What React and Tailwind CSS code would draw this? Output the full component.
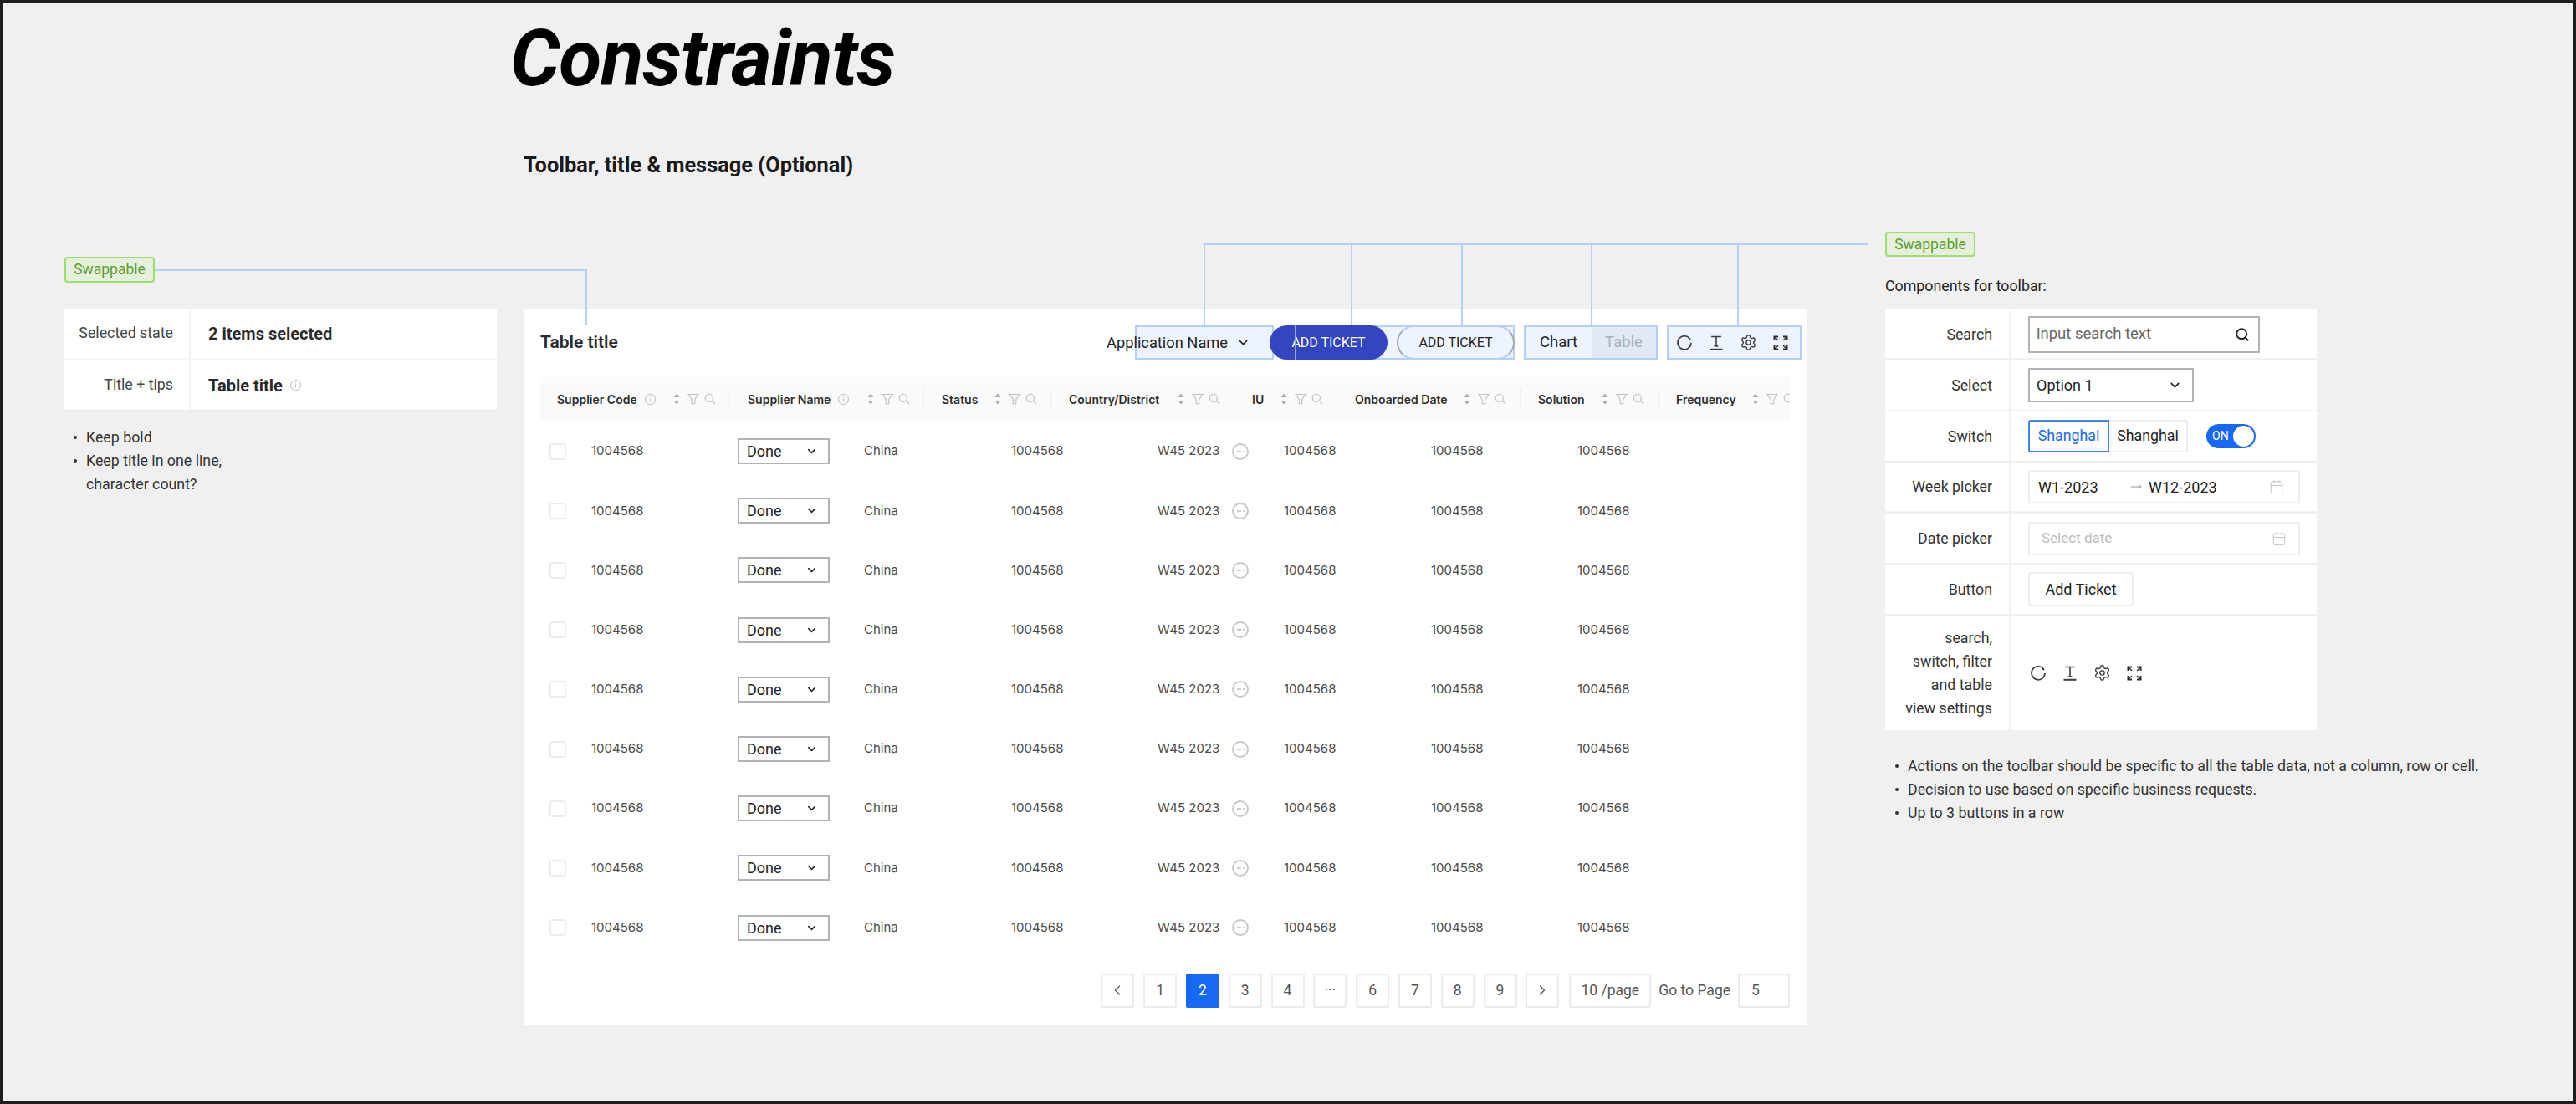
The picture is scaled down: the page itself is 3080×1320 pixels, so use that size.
import React from "react";
import { ChevronDown, ChevronLeft, ChevronRight, Search, Calendar, Settings, MoveRight } from "lucide-react";

const roboto = "font-['Roboto',sans-serif]";
const inter = "font-['Inter',sans-serif]";

function Info({ className = "" }) {
  return (
    <svg viewBox="0 0 16 16" className={"w-[15px] h-[15px] " + className} fill="none" stroke="#b8b8b8" strokeWidth="1">
      <circle cx="8" cy="8" r="6.5" />
      <path d="M8 7v4.2M8 4.6v1" />
    </svg>
  );
}
function Sort() {
  return (
    <svg viewBox="0 0 10 16" className="w-[10px] h-[16px]" fill="#aaaaaa">
      <path d="M5 1.5 8.5 6h-7zM5 14.5 1.5 10h7z" />
    </svg>
  );
}
function Filter() {
  return (
    <svg viewBox="0 0 14 14" className="w-[14px] h-[14px]" fill="none" stroke="#bdbdbd" strokeWidth="1.1">
      <path d="M1 1.5h12L8.8 7.5V12.8H5.2V7.5z" />
    </svg>
  );
}
function MiniSearch() {
  return (
    <svg viewBox="0 0 14 14" className="w-[14px] h-[14px]" fill="none" stroke="#bdbdbd" strokeWidth="1.1">
      <circle cx="5.8" cy="5.8" r="4.6" />
      <path d="m9.2 9.2 3.8 3.8" />
    </svg>
  );
}
function Refresh() {
  return (
    <svg viewBox="0 0 20 20" className="w-[20px] h-[20px]" fill="none" stroke="#3d3d3d" strokeWidth="1.7">
      <path d="M16.6 5.2A8 8 0 1 0 18 10" />
      <circle cx="16.4" cy="5.4" r="1" fill="#3d3d3d" stroke="none" />
    </svg>
  );
}
function TextSize() {
  return (
    <svg viewBox="0 0 20 20" className="w-[20px] h-[20px]" fill="none" stroke="#3d3d3d" strokeWidth="1.7">
      <path d="M4 2.5h12M10 2.5v12M7.5 14h5" strokeWidth="1.6" />
      <path d="M2.5 17.8h15" strokeWidth="2" />
    </svg>
  );
}
function Full() {
  return (
    <svg viewBox="0 0 20 20" className="w-[20px] h-[20px]" fill="none" stroke="#2b2b2b" strokeWidth="2">
      <path d="M2.5 7V2.5H7M13 2.5h4.5V7M17.5 13v4.5H13M7 17.5H2.5V13" />
      <path d="M3 3l4 4M17 3l-4 4M17 17l-4-4M3 17l4-4" strokeWidth="1.4" />
    </svg>
  );
}
function ToolIcons({ className = "" }) {
  return (
    <div className={"flex items-center gap-[18px] " + className}>
      <Refresh />
      <TextSize />
      <Settings size={21} strokeWidth={1.6} color="#3d3d3d" />
      <Full />
    </div>
  );
}

function HeadCell({ name, w, info }) {
  return (
    <div className={"flex items-center shrink-0 " + w}>
      <span className="text-[14px] font-semibold text-[#2e2e2e] whitespace-nowrap">{name}</span>
      {info && <Info className="ml-[8px]" />}
      <div className="ml-auto flex items-center shrink-0">
        <span className="w-[20px] flex justify-center"><Sort /></span>
        <span className="w-[20px] flex justify-center"><Filter /></span>
        <span className="w-[20px] flex justify-center"><MiniSearch /></span>
      </div>
      <span className="w-[1px] h-[24px] bg-[#eeeeee] ml-[13px] mr-[21px] shrink-0" />
    </div>
  );
}

function Done() {
  return (
    <div className={"w-[110px] h-[31px] border-2 border-[#b3b3b3] bg-white flex items-center justify-between pl-[9px] pr-[12px] " + roboto}>
      <span className="text-[18px] text-[#222222]">Done</span>
      <ChevronDown size={15} strokeWidth={2.4} color="#222222" />
    </div>
  );
}

function Row() {
  const num = "text-[15px] text-[#4a4a4a] shrink-0";
  return (
    <div className="h-[71.2px] flex items-center pl-[11px]">
      <div className="w-[50px] shrink-0">
        <div className="w-[20px] h-[20px] rounded-[3px] border-2 border-[#ececec] bg-white" />
      </div>
      <div className={num + " w-[175px]"}>1004568</div>
      <div className="w-[151px] shrink-0"><Done /></div>
      <div className={num + " w-[176px]"}>China</div>
      <div className={num + " w-[175px]"}>1004568</div>
      <div className={num + " w-[89px] whitespace-nowrap"}>W45 2023</div>
      <div className="w-[62px] shrink-0">
        <div className="w-[20px] h-[20px] rounded-full border-2 border-[#c9c9c9] flex items-center justify-center gap-[1.5px]">
          <span className="w-[2px] h-[2px] rounded-full bg-[#bdbdbd]" />
          <span className="w-[2px] h-[2px] rounded-full bg-[#bdbdbd]" />
          <span className="w-[2px] h-[2px] rounded-full bg-[#bdbdbd]" />
        </div>
      </div>
      <div className={num + " w-[176px]"}>1004568</div>
      <div className={num + " w-[175px]"}>1004568</div>
      <div className={num}>1004568</div>
    </div>
  );
}

function PageBtn({ children, active, className = "w-[40px]" }) {
  return (
    <div className={"h-[41px] rounded-[2px] border-2 flex items-center justify-center text-[17.5px] shrink-0 " + className + " " +
      (active ? "bg-[#1668f5] border-[#1668f5] text-white" : "bg-white border-[#ebebeb] text-[#555555]")}>
      {children}
    </div>
  );
}

function Bullet({ children }) {
  return (
    <li className="flex items-center h-[28px]">
      <span className="w-[4px] h-[4px] rounded-full bg-[#333333] shrink-0" />
      <span className="ml-[11px] whitespace-nowrap">{children}</span>
    </li>
  );
}

function Badge({ className = "" }) {
  return (
    <div className={"w-[108px] rounded-[4px] border-2 border-[#9ade6c] bg-[#e5efdc] text-[#5b9e2a] text-[17.5px] flex items-center justify-center " + roboto + " " + className}>
      Swappable
    </div>
  );
}

function CompRow({ label, h = "h-[59px]", children }) {
  return (
    <div className={"flex bg-white " + h}>
      <div className="w-[150px] shrink-0 border-r-2 border-[#f2f2f2] flex items-center justify-end pr-[20px] text-right text-[17.8px] leading-[28px] text-[#333333]">
        {label}
      </div>
      <div className="flex-1 flex items-center pl-[21px]">{children}</div>
    </div>
  );
}

const L = "absolute bg-[#b4cffa]";

export default function App() {
  return (
    <div className={"relative w-[3080px] h-[1320px] border-4 border-[#1e1e1e] bg-[#f0f0f0] overflow-hidden flex pl-[73px] " + roboto}>
      {/* Left column */}
      <div className="w-[517px] shrink-0 pt-[303px]">
        <Badge className="h-[31px]" />
        <div className="mt-[31px] flex flex-col gap-[3px] bg-[#f6f6f6] shadow-[0_1px_0_#e8e8e8]">
          <div className="h-[59px] bg-white flex items-center">
            <div className="w-[151px] h-full border-r-2 border-[#f2f2f2] flex items-center justify-end pr-[19px] text-[17.8px] text-[#444444]">Selected state</div>
            <div className="pl-[21px] text-[20px] font-bold text-[#2a2a2a]">2 items selected</div>
          </div>
          <div className="h-[59px] bg-white flex items-center">
            <div className="w-[151px] h-full border-r-2 border-[#f2f2f2] flex items-center justify-end pr-[19px] text-[17.8px] text-[#444444]">Title + tips</div>
            <div className="pl-[21px] text-[20px] font-bold text-[#2a2a2a]">Table title</div>
            <Info className="ml-[8px]" />
          </div>
        </div>
        <ul className="mt-[19px] pl-[11px] text-[17.8px] text-[#333333]">
          <Bullet>Keep bold</Bullet>
          <Bullet>Keep title in one line,</Bullet>
          <li className="h-[28px] flex items-center pl-[15px]">character count?</li>
        </ul>
      </div>

      {/* Centre column */}
      <div className="w-[1534px] shrink-0 ml-[32px]">
        <h1 className="h-[140px] -ml-[16px] pt-[8px] text-[93.5px] leading-[116px] font-bold italic text-black whitespace-nowrap tracking-[-1px]">Constraints</h1>
        <div className="h-[225px] pt-[36px] text-[25.4px] leading-[34px] font-bold text-[#1a1a1a]">Toolbar, title &amp; message (Optional)</div>

        <div className={"w-[1534px] h-[856px] bg-white px-[20px] pt-[20px] " + inter}>
          <div className="h-[41px] flex items-center -mr-[14px]">
            <div className={"text-[21px] font-semibold text-[#2b2b2b] " + roboto}>Table title</div>
            {/* Toolbar */}
            <div className={"ml-auto flex items-center h-[41px] " + roboto}>
              <div className="relative w-[200px] h-full flex items-center">
                <div className="absolute left-[34px] right-0 top-0 bottom-0 bg-[#eef4ff] border-2 border-[#b4cffa]" />
                <span className="relative text-[18.3px] text-[#222222]">Application Name</span>
                <ChevronDown className="relative ml-[10px]" size={17} strokeWidth={2} color="#222222" />
              </div>
              <div className="relative -ml-[5px] flex items-center gap-[11px] h-full">
                <div className="absolute left-[30px] right-0 top-0 bottom-0 bg-[#eef4ff] border-2 border-[#b4cffa]" />
                <div className="relative w-[141px] h-[41px] rounded-full bg-[#3544bf] text-white text-[16px] flex items-center justify-center">ADD TICKET</div>
                <div className="relative w-[141px] h-[41px] rounded-full border-2 border-x-[#a8a8a8] border-y-[#b4cffa] bg-[#eef4ff] text-[#222222] text-[16px] flex items-center justify-center">ADD TICKET</div>
                <div className="absolute left-[30px] top-0 bottom-0 w-[2px] bg-[#8fa4ea]" />
              </div>
              <div className="ml-[11px] w-[160px] h-full flex border-2 border-[#b4cffa] bg-[#eef4ff] text-[18.5px]">
                <div className="w-[79px] flex items-center justify-center text-[#222222]">Chart</div>
                <div className="flex-1 bg-[#e2e9f5] flex items-center justify-center text-[#a9b0ba]">Table</div>
              </div>
              <div className="ml-[11px] w-[161px] h-full border-2 border-[#b4cffa] bg-[#eef4ff] flex items-center pl-[9px]">
                <ToolIcons />
              </div>
            </div>
          </div>

          <div className="mt-[21px] h-[52px] w-[1494px] bg-[#fafafa] overflow-hidden flex items-center pl-[20px]">
            <HeadCell name="Supplier Code" w="w-[228px]" info />
            <HeadCell name="Supplier Name" w="w-[232px]" info />
            <HeadCell name="Status" w="w-[152px]" />
            <HeadCell name="Country/District" w="w-[219px]" />
            <HeadCell name="IU" w="w-[123px]" />
            <HeadCell name="Onboarded Date" w="w-[219px]" />
            <HeadCell name="Solution" w="w-[165px]" />
            <HeadCell name="Frequency" w="w-[180px]" />
          </div>

          <div className="pt-[1px]">
            {[0, 1, 2, 3, 4, 5, 6, 7, 8].map((i) => <Row key={i} />)}
          </div>

          <div className={"mt-[19px] flex items-center justify-end " + roboto}>
            <div className="flex items-center gap-[10.8px]">
              <PageBtn><ChevronLeft size={20} strokeWidth={1.5} /></PageBtn>
              <PageBtn>1</PageBtn>
              <PageBtn active>2</PageBtn>
              {["3", "4", "···", "6", "7", "8", "9"].map((p) => <PageBtn key={p}>{p}</PageBtn>)}
              <PageBtn><ChevronRight size={20} strokeWidth={1.5} /></PageBtn>
            </div>
            <PageBtn className="w-[98px] ml-[12px]">10 /page</PageBtn>
            <span className="ml-[9px] text-[17.5px] text-[#555555] whitespace-nowrap">Go to Page</span>
            <div className="ml-[9px] w-[62px] h-[41px] rounded-[2px] border-2 border-[#ebebeb] bg-white flex items-center pl-[14px] text-[17.5px] text-[#555555]">5</div>
          </div>
        </div>
      </div>

      {/* Right column */}
      <div className="w-[516px] shrink-0 ml-[94px] pt-[273px]">
        <Badge className="h-[30px]" />
        <div className="mt-[21px] h-[28px] leading-[28px] text-[17.8px] text-[#222222] whitespace-nowrap">Components for toolbar:</div>
        <div className="mt-[13px] flex flex-col">
          <CompRow label="Search" h="h-[59px] pt-[3px]">
            <div className="w-[277px] h-[44px] border-2 border-[#b3b3b3] flex items-center justify-between pl-[8px] pr-[10px] text-[18.5px] text-[#666666]">
              input search text
              <Search size={18} strokeWidth={2.4} color="#222222" />
            </div>
          </CompRow>
          <CompRow label="Select" h="h-[59px] mt-[3px]">
            <div className="w-[198px] h-[41px] border-2 border-[#b3b3b3] flex items-center justify-between pl-[8px] pr-[12px] text-[18px] text-[#222222]">
              Option 1
              <ChevronDown size={17} strokeWidth={2.4} color="#222222" />
            </div>
          </CompRow>
          <CompRow label="Switch" h="h-[59px] mt-[2px]">
            <div className="flex h-[39px] text-[17.8px]">
              <div className="w-[97px] border-2 border-[#3d82f6] rounded-l-[3px] text-[#1668f5] flex items-center justify-center">Shanghai</div>
              <div className="w-[94px] border-2 border-l-0 border-[#ededed] rounded-r-[3px] text-[#222222] flex items-center justify-center">Shanghai</div>
            </div>
            <div className="ml-[22px] w-[59px] h-[29px] rounded-full bg-[#1668f5] flex items-center justify-between pl-[7px] pr-[2px] text-white text-[14px]">
              ON
              <span className="w-[25px] h-[25px] rounded-full bg-white" />
            </div>
          </CompRow>
          <CompRow label="Week picker" h="h-[58px] mt-[2px]">
            <div className="w-[325px] h-[40px] border-2 border-[#ededed] rounded-[3px] flex items-center pl-[10px] text-[18px] text-[#222222]">
              <span className="w-[110px]">W1-2023</span>
              <MoveRight size={14} strokeWidth={1.5} color="#888888" />
              <span className="ml-[8px]">W12-2023</span>
              <Calendar className="ml-auto mr-[17px]" size={18} strokeWidth={1.3} color="#c4c4c4" />
            </div>
          </CompRow>
          <CompRow label="Date picker" h="h-[59px] mt-[3px]">
            <div className="w-[325px] h-[40px] border-2 border-[#ededed] rounded-[3px] flex items-center justify-between pl-[14px] pr-[14px] text-[17px] text-[#bbbbbb]">
              Select date
              <Calendar size={18} strokeWidth={1.3} color="#c4c4c4" />
            </div>
          </CompRow>
          <CompRow label="Button" h="h-[59px] mt-[2px]">
            <div className="w-[126px] h-[41px] border-2 border-[#ededed] rounded-[4px] flex items-center justify-center text-[18px] text-[#222222]">Add Ticket</div>
          </CompRow>
          <CompRow label={<>search,<br />switch, filter<br />and table<br />view settings</>} h="h-[137px] mt-[2px]">
            <ToolIcons className="ml-[2px]" />
          </CompRow>
        </div>
        <ul className="mt-[29px] pl-[12px] text-[17.8px] text-[#333333]">
          <Bullet>Actions on the toolbar should be specific to all the table data, not a column, row or cell.</Bullet>
          <Bullet>Decision to use based on specific business requests.</Bullet>
          <Bullet>Up to 3 buttons in a row</Bullet>
        </ul>
      </div>

      {/* Annotation connectors */}
      <div className={L + " left-[181px] top-[318px] w-[517px] h-[2px]"} />
      <div className={L + " left-[696px] top-[318px] w-[2px] h-[67px]"} />
      <div className={L + " left-[1435px] top-[287px] w-[795px] h-[2px]"} />
      <div className={L + " left-[1435px] top-[287px] w-[2px] h-[98px]"} />
      <div className={L + " left-[1611px] top-[287px] w-[2px] h-[98px]"} />
      <div className={L + " left-[1743px] top-[287px] w-[2px] h-[98px]"} />
      <div className={L + " left-[1898px] top-[287px] w-[2px] h-[98px]"} />
      <div className={L + " left-[2073px] top-[287px] w-[2px] h-[98px]"} />
    </div>
  );
}
